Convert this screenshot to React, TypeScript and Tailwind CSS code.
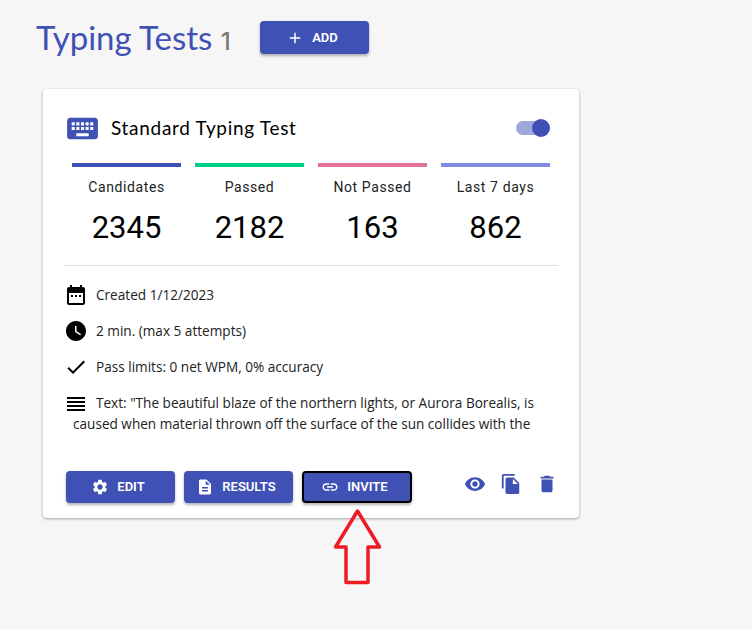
const ICONS = {
  add: "M19 13h-6v6h-2v-6H5v-2h6V5h2v6h6v2z",
  keyboard:
    "M20 5H4c-1.1 0-1.99.9-1.99 2L2 17c0 1.1.9 2 2 2h16c1.1 0 2-.9 2-2V7c0-1.1-.9-2-2-2zm-9 3h2v2h-2V8zm0 3h2v2h-2v-2zM8 8h2v2H8V8zm0 3h2v2H8v-2zm-1 2H5v-2h2v2zm0-3H5V8h2v2zm9 7H8v-2h8v2zm0-4h-2v-2h2v2zm0-3h-2V8h2v2zm3 3h-2v-2h2v2zm0-3h-2V8h2v2z",
  calendar:
    "M19 4h-1V2h-2v2H8V2H6v2H5c-1.11 0-1.99.9-1.99 2L3 20c0 1.1.89 2 2 2h14c1.1 0 2-.9 2-2V6c0-1.1-.9-2-2-2zm0 16H5V10h14v10zM9 14H7v-2h2v2zm4 0h-2v-2h2v2zm4 0h-2v-2h2v2z",
  clock:
    "M12 2C6.5 2 2 6.5 2 12s4.5 10 10 10 10-4.5 10-10S17.5 2 12 2zm4.2 14.2L11 13V7h1.5v5.2l4.5 2.7-.8 1.3z",
  check: "M9 16.17L4.83 12l-1.42 1.41L9 19 21 7l-1.41-1.41z",
  lines: "M3 15h18v-2H3v2zm0 4h18v-2H3v2zm0-8h18V9H3v2zm0-6v2h18V5H3z",
  settings:
    "M19.14 12.94c.04-.3.06-.61.06-.94 0-.32-.02-.64-.07-.94l2.03-1.58c.18-.14.23-.41.12-.61l-1.92-3.32c-.12-.22-.37-.29-.59-.22l-2.39.96c-.5-.38-1.03-.7-1.62-.94l-.36-2.54c-.04-.24-.24-.41-.48-.41h-3.84c-.24 0-.43.17-.47.41l-.36 2.54c-.59.24-1.13.57-1.62.94l-2.39-.96c-.22-.08-.47 0-.59.22L2.74 8.87c-.12.21-.08.47.12.61l2.03 1.58c-.05.3-.09.63-.09.94s.02.64.07.94l-2.03 1.58c-.18.14-.23.41-.12.61l1.92 3.32c.12.22.37.29.59.22l2.39-.96c.5.38 1.03.7 1.62.94l.36 2.54c.05.24.24.41.48.41h3.84c.24 0 .44-.17.47-.41l.36-2.54c.59-.24 1.13-.56 1.62-.94l2.39.96c.22.08.47 0 .59-.22l1.92-3.32c.12-.22.07-.47-.12-.61l-2.01-1.58zM12 15.6c-1.98 0-3.6-1.62-3.6-3.6s1.62-3.6 3.6-3.6 3.6 1.62 3.6 3.6-1.62 3.6-3.6 3.6z",
  description:
    "M14 2H6c-1.1 0-1.99.9-1.99 2L4 20c0 1.1.89 2 1.99 2H18c1.1 0 2-.9 2-2V8l-6-6zm2 16H8v-2h8v2zm0-4H8v-2h8v2zm-3-5V3.5L18.5 9H13z",
  link: "M3.9 12c0-1.71 1.39-3.1 3.1-3.1h4V7H7c-2.76 0-5 2.24-5 5s2.24 5 5 5h4v-1.9H7c-1.71 0-3.1-1.39-3.1-3.1zM8 13h8v-2H8v2zm9-6h-4v1.9h4c1.71 0 3.1 1.39 3.1 3.1s-1.39 3.1-3.1 3.1h-4V17h4c2.76 0 5-2.24 5-5s-2.24-5-5-5z",
  eye: "M12 4.5C7 4.5 2.73 7.61 1 12c1.73 4.39 6 7.5 11 7.5s9.27-3.11 11-7.5c-1.73-4.39-6-7.5-11-7.5zM12 17c-2.76 0-5-2.24-5-5s2.24-5 5-5 5 2.24 5 5-2.24 5-5 5zm0-8c-1.66 0-3 1.34-3 3s1.34 3 3 3 3-1.34 3-3-1.34-3-3-3z",
  copy: "M16 1H4c-1.1 0-2 .9-2 2v14h2V3h12V1zm-1 4 6 6v10c0 1.1-.9 2-2 2H7.99C6.89 23 6 22.1 6 21l.01-14c0-1.1.89-2 1.99-2h7zm-1 7h5.5L14 6.5V12z",
  trash: "M6 19c0 1.1.9 2 2 2h8c1.1 0 2-.9 2-2V7H6v12zM19 4h-3.5l-1-1h-5l-1 1H5v2h14V4z",
};

function Icon({ d, className }: { d: string; className: string }) {
  return (
    <svg viewBox="0 0 24 24" fill="currentColor" className={className} aria-hidden="true">
      <path d={d} />
    </svg>
  );
}

const STATS = [
  { label: "Candidates", value: "2345", bar: "bg-[#3f51b5]" },
  { label: "Passed", value: "2182", bar: "bg-[#00d084]" },
  { label: "Not Passed", value: "163", bar: "bg-[#e27396]" },
  { label: "Last 7 days", value: "862", bar: "bg-[#7e8de2]" },
];

const ROWS = [
  { icon: ICONS.calendar, text: "Created 1/12/2023" },
  { icon: ICONS.clock, text: "2 min. (max 5 attempts)" },
  { icon: ICONS.check, text: "Pass limits: 0 net WPM, 0% accuracy" },
];

function ActionButton({
  icon,
  label,
  className,
}: {
  icon: string;
  label: string;
  className: string;
}) {
  return (
    <button
      type="button"
      className={`flex h-8 items-center justify-center gap-2 rounded bg-[#3f51b5] pr-[5px] font-['Roboto',sans-serif] text-[13px] font-semibold text-white shadow-[0_2px_3px_rgba(0,0,0,0.3)] ${className}`}
    >
      <Icon d={icon} className="h-[18px] w-[18px]" />
      {label}
    </button>
  );
}

export default function App() {
  return (
    <div className="relative h-[630px] w-[752px] overflow-hidden bg-[#f6f6f6]">
      <div className="flex h-[89px] items-start pl-9 pt-[21px]">
        <h1 className="h-[33px] w-[224px] font-['Lato',sans-serif] text-[33px] leading-[33px] text-[#3f51b5]">
          Typing Tests{" "}
          <span className="font-['Inter',sans-serif] text-[24px] font-medium text-[#7a7a7a]">1</span>
        </h1>
        <button
          type="button"
          className="flex h-[33px] w-[109px] items-center justify-center gap-2 rounded bg-[#3f51b5] pr-[5px] font-['Roboto',sans-serif] text-[13px] font-semibold text-white shadow-[0_2px_3px_rgba(0,0,0,0.3)]"
        >
          <Icon d={ICONS.add} className="h-[18px] w-[18px]" />
          ADD
        </button>
      </div>

      <div className="ml-[43px] flex h-[429px] w-[536px] flex-col rounded bg-white shadow-[0_1px_3px_rgba(0,0,0,0.35)]">
        <div className="flex h-[74px] items-center pl-[21px] pr-[33px] pt-[4px]">
          <Icon d={ICONS.keyboard} className="-mr-[3px] h-[37px] w-[37px] text-[#3f51b5]" />
          <span className="ml-[13px] font-['Lato',sans-serif] text-[19px] tracking-[0.7px] text-black">
            Standard Typing Test
          </span>
          <div className="relative ml-auto h-[14px] w-[30px] rounded-full bg-[#9fa8da]">
            <div className="absolute -top-[2px] left-[16px] h-[18px] w-[18px] rounded-full bg-[#3f51b5]" />
          </div>
        </div>

        <div className="flex gap-[14px] pl-[29px] pr-[29px]">
          {STATS.map((s) => (
            <div key={s.label} className="flex flex-1 flex-col items-center">
              <div className={`h-1 w-full ${s.bar}`} />
              <div className="mt-[12px] font-['Roboto',sans-serif] text-[14px] leading-4 tracking-[0.6px] text-[#222]">
                {s.label}
              </div>
              <div className="mt-[15px] font-['Roboto',sans-serif] text-[31px] leading-9 text-black">
                {s.value}
              </div>
            </div>
          ))}
        </div>

        <div className="mx-[21px] mt-[19px] h-px bg-[#e0e0e0]" />

        <div className="flex flex-col gap-3 pl-[21px] pt-[17px] font-['Open_Sans',sans-serif] text-[13.6px] leading-6 text-[#222]">
          {ROWS.map((r) => (
            <div key={r.text} className="flex items-center gap-2">
              <Icon d={r.icon} className="h-6 w-6 text-black" />
              <span>{r.text}</span>
            </div>
          ))}
          <p className="mt-px w-[475px] pl-[9px] leading-[21px]">
            <Icon
              d={ICONS.lines}
              className="-my-1 -ml-[9px] mr-2 inline-block h-6 w-6 align-middle text-black"
            />
            Text: "The beautiful blaze of the northern lights, or Aurora Borealis, is caused when
            material thrown off the surface of the sun collides with the
          </p>
        </div>

        <div className="mt-auto flex items-center pb-[15px] pl-[23px] pr-[21px]">
          <div className="flex items-center gap-[9px]">
            <ActionButton icon={ICONS.settings} label="EDIT" className="w-[109px]" />
            <ActionButton icon={ICONS.description} label="RESULTS" className="w-[109px]" />
            <ActionButton
              icon={ICONS.link}
              label="INVITE"
              className="w-[110px] border-2 border-black"
            />
          </div>
          <div className="ml-auto flex items-center gap-[14px] pb-[6px] text-[#3f51b5]">
            <Icon d={ICONS.eye} className="h-[22px] w-[22px]" />
            <Icon d={ICONS.copy} className="h-[22px] w-[22px]" />
            <Icon d={ICONS.trash} className="h-[22px] w-[22px]" />
          </div>
        </div>
      </div>

      <svg
        viewBox="0 0 752 630"
        className="absolute left-0 top-0 h-[630px] w-[752px]"
        fill="none"
        aria-hidden="true"
      >
        <path
          d="M357.5 511 L379.5 547 L368 547 L368 582.5 L346 582.5 L346 547 L335.5 547 Z"
          stroke="#ed1c24"
          strokeWidth="3.5"
          strokeLinejoin="round"
        />
      </svg>
    </div>
  );
}
